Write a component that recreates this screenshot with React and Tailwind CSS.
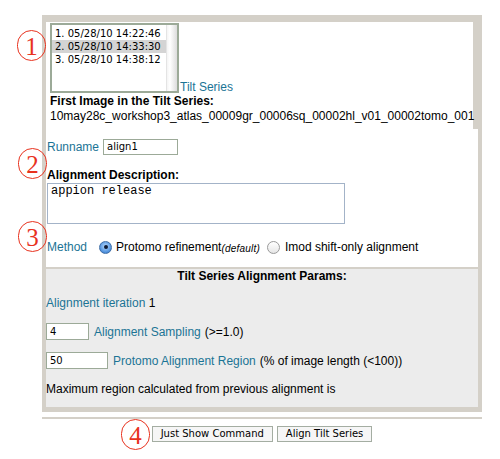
import React from 'react';

const teal = 'text-[#1b7495]';

const Marker = ({ n, className }) => (
  <div
    className={`absolute w-[29px] h-[31px] rounded-full border-[1.5px] border-[#e8321e] flex items-center justify-center text-[#e8321e] text-[25px] leading-none ${className}`}
    style={{ fontFamily: '"Liberation Serif", serif' }}
  >
    <span className="mt-[2px]">{n}</span>
  </div>
);

const Radio = ({ checked }) =>
  checked ? (
    <span className="inline-flex w-[13px] h-[13px] rounded-full border border-[#3f6fa8] bg-[radial-gradient(circle_at_50%_40%,#b9dcff,#4d8fdc_70%,#2f63b0)] items-center justify-center">
      <span className="w-[4px] h-[4px] rounded-full bg-[#0e1a33]" />
    </span>
  ) : (
    <span className="inline-block w-[13px] h-[13px] rounded-full border border-[#9a9a9a] bg-[linear-gradient(#ffffff,#e6e6e6)]" />
  );

const dates = ['1. 05/28/10 14:22:46', '2. 05/28/10 14:33:30', '3. 05/28/10 14:38:12'];

export default function App() {
  return (
    <div
      className="relative w-[500px] h-[459px] bg-white text-black text-[12px]"
      style={{ fontFamily: '"Liberation Sans", Arial, sans-serif' }}
    >
      <div className="ml-[42px] pt-[15px] w-[440px]">
        <div className="bg-[#d4d0c8] pt-[7px] pl-[4px] pr-[4px] pb-[5px]">
          {/* tilt series */}
          <div className="w-[427px] h-[107px] bg-white pl-[4px] pt-[1px]">
            <div className="flex items-end">
              <div className="w-[129px] h-[70px] border-2 border-[#9caa98] flex bg-white">
                <div
                  className="flex-1 pt-[2px] text-[10px] leading-[13px]"
                  style={{ fontFamily: '"DejaVu Sans", sans-serif' }}
                >
                  {dates.map((d, i) => (
                    <div key={d} className={`pl-[3px] whitespace-nowrap ${i === 1 ? 'bg-[#d4d4d4]' : ''}`}>
                      {d}
                    </div>
                  ))}
                </div>
                <div className="w-[11px] bg-[linear-gradient(90deg,#f4f4f4,#ffffff_30%,#dcdcdc)] border-l border-[#e4e4e4]" />
              </div>
              <span className={`${teal} leading-[14px] ml-[1px] mb-[-1px]`}>Tilt Series</span>
            </div>
            <div className="font-bold leading-[15px] mt-[1px]">First Image in the Tilt Series:</div>
            <div className="leading-[15px] whitespace-nowrap">
              10may28c_workshop3_atlas_00009gr_00006sq_00002hl_v01_00002tomo_001
            </div>
          </div>

          {/* run settings */}
          <div className="h-[138px] bg-white pl-[1px] pt-[10px]">
            <div className="flex items-center h-[16px]">
              <span className={teal}>Runname</span>
              <div
                className="ml-[4px] w-[75px] h-[16px] border border-[#9caa98] pl-[3px] text-[10px] leading-[14px]"
                style={{ fontFamily: '"DejaVu Sans", sans-serif' }}
              >
                align1
              </div>
            </div>
            <div className="font-bold leading-[14px] mt-[13px]">Alignment Description:</div>
            <div
              className="mt-[1px] w-[298px] h-[41px] border border-[#a3b3c8] pl-[3px] text-[12px] leading-[14px]"
              style={{ fontFamily: '"Liberation Mono", monospace' }}
            >
              appion release
            </div>
            <div className="flex items-center h-[16px] mt-[15px]">
              <span className={teal}>Method</span>
              <span className="ml-[12px] mr-[4px] flex">
                <Radio checked />
              </span>
              <span>Protomo refinement</span>
              <span className="italic text-[10px] mt-[2px] tracking-[0.2px]">(default)</span>
              <span className="ml-[7px] mr-[5px] flex">
                <Radio />
              </span>
              <span>Imod shift-only alignment</span>
            </div>
          </div>

          {/* params */}
          <div className="h-[140px] bg-[#ececec] border-t-2 border-[#d4d0c8]">
            <div className="font-bold leading-[14px] text-center">Tilt Series Alignment Params:</div>
            <div className="leading-[14px] mt-[13px]">
              <span className={teal}>Alignment iteration</span> 1
            </div>
            <div className="flex items-center h-[17px] mt-[13px]">
              <div
                className="w-[43px] h-[17px] bg-white border border-[#9caa98] pl-[3px] text-[10px] leading-[15px]"
                style={{ fontFamily: '"DejaVu Sans", sans-serif' }}
              >
                4
              </div>
              <span className={`${teal} ml-[5px]`}>Alignment Sampling</span>
              <span className="ml-[4px]">(&gt;=1.0)</span>
            </div>
            <div className="flex items-center h-[17px] mt-[12px]">
              <div
                className="w-[62px] h-[17px] bg-white border border-[#9caa98] pl-[3px] text-[10px] leading-[15px]"
                style={{ fontFamily: '"DejaVu Sans", sans-serif' }}
              >
                50
              </div>
              <span className={`${teal} ml-[5px]`}>Protomo Alignment Region</span>
              <span className="ml-[4px]">(% of image length (&lt;100))</span>
            </div>
            <div className="leading-[14px] mt-[13px]">
              Maximum region calculated from previous alignment is
            </div>
          </div>
        </div>

        <div className="mt-[5px] h-[2px] bg-[#d4d0c8]" />

        <div
          className="flex justify-center gap-[4px] mt-[7px] text-[10px]"
          style={{ fontFamily: '"DejaVu Sans", sans-serif' }}
        >
          <div className="h-[16px] px-[8px] border border-[#a4ada2] bg-[#f6f6f6] leading-[14px]">
            Just Show Command
          </div>
          <div className="h-[16px] px-[8px] border border-[#a4ada2] bg-[#f6f6f6] leading-[14px]">
            Align Tilt Series
          </div>
        </div>
      </div>

      <Marker n="1" className="left-[17px] top-[30px]" />
      <Marker n="2" className="left-[18px] top-[148px]" />
      <Marker n="3" className="left-[18px] top-[221px]" />
      <Marker n="4" className="left-[121px] top-[419px]" />
    </div>
  );
}
